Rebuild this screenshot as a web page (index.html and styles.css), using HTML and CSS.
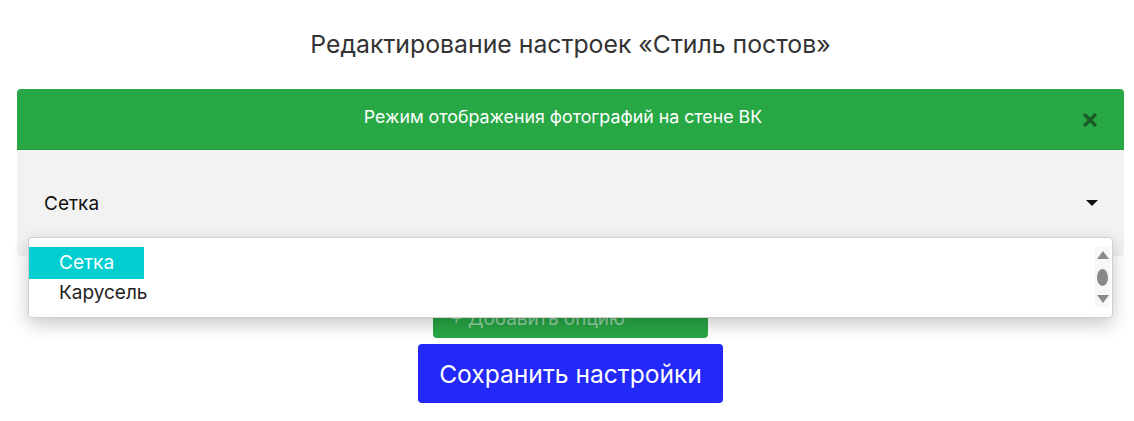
FILE: index.html
```html
<!DOCTYPE html>
<html lang="ru">
<head>
<meta charset="utf-8">
<link rel="stylesheet" href="styles.css">
</head>
<body>
<div class="page">
<h1 class="title">Редактирование настроек «Стиль постов»</h1>
<div class="panel">
  <div class="panel-head">
    <span class="panel-title">Режим отображения фотографий на стене ВК</span>
    <span class="close"><svg width="14" height="14" viewBox="0 0 14 14"><path d="M2 2L12 12M12 2L2 12" stroke="#1b5a29" stroke-width="3.2" stroke-linecap="round"/></svg></span>
  </div>
  <div class="panel-body">
    <div class="select">
      <span>Сетка</span>
      <span class="caret"></span>
    </div>
  </div>
  <div class="dropdown">
    <ul class="options">
      <li><span class="opt active">Сетка</span></li>
      <li><span class="opt">Карусель</span></li>
    </ul>
    <div class="scroll">
      <span class="tri up"></span>
      <span class="thumb"></span>
      <span class="tri down"></span>
    </div>
  </div>
</div>
<div class="actions">
  <button class="btn-add">+ Добавить опцию</button>
  <button class="btn-save">Сохранить настройки</button>
</div>
</div>
</body>
</html>
```
FILE: styles.css
```css
* { box-sizing: border-box; }
body {
  margin: 0;
  background: #fff;
  font-family: Inter, Roboto, "Noto Sans", sans-serif;
}
.page {
  margin: 0 10px 0 17px;
}
.title {
  margin: 0;
  padding-top: 28px;
  height: 89px;
  text-align: center;
  font-weight: 400;
  font-size: 24.8px;
  line-height: 32px;
  color: #333;
}
.panel {
  position: relative;
}
.panel-head {
  position: relative;
  height: 61px;
  background: #28a745;
  border-bottom: 1px solid #23963d;
  border-radius: 4px 4px 0 0;
  display: flex;
  align-items: center;
  justify-content: center;
  padding-bottom: 5px;
  padding-right: 15px;
}
.panel-title {
  color: #fff;
  font-size: 17.8px;
}
.close {
  position: absolute;
  right: 27px;
  top: 24px;
  display: flex;
}
.panel-body {
  height: 106px;
  background: #f2f2f2;
  border-radius: 0 0 4px 4px;
  padding: 41px 26px 0 27px;
}
.select {
  display: flex;
  justify-content: space-between;
  align-items: center;
  font-size: 19px;
  color: #111;
  height: 24px;
}
.caret {
  width: 0;
  height: 0;
  border-left: 6px solid transparent;
  border-right: 6px solid transparent;
  border-top: 6px solid #111;
}
.dropdown {
  position: absolute;
  left: 11px;
  right: 11px;
  top: 148px;
  height: 81px;
  background: #fff;
  border: 1px solid #cfcfcf;
  border-radius: 4px;
  box-shadow: 0 6px 18px rgba(0,0,0,0.22);
  display: flex;
  justify-content: space-between;
  z-index: 2;
}
.options {
  list-style: none;
  margin: 0;
  padding: 9px 0 0 0;
}
.opt {
  display: inline-block;
  height: 32px;
  line-height: 31px;
  padding: 0 30px 0 30px;
  font-size: 19px;
  color: #222;
}
.options li + li .opt {
  height: 28px;
  line-height: 28px;
}
.opt.active {
  background: #00ced1;
  color: #fff;
}
.scroll {
  width: 15px;
  margin: 9px 2px 10px 0;
  background: #f7f7f7;
  display: flex;
  flex-direction: column;
  align-items: center;
  justify-content: space-between;
  padding: 4px 0 4px;
}
.tri {
  width: 0;
  height: 0;
  border-left: 6px solid transparent;
  border-right: 6px solid transparent;
}
.tri.up { border-bottom: 8px solid #8a8a8a; }
.tri.down { border-top: 8px solid #8a8a8a; }
.thumb {
  width: 11px;
  height: 17px;
  border-radius: 50%;
  background: #888;
}
.actions {
  display: flex;
  flex-direction: column;
  align-items: center;
  padding-top: 42px;
}
.btn-add {
  width: 275px;
  height: 40px;
  border: none;
  border-radius: 4px;
  background: #28a745;
  color: rgba(255,255,255,0.5);
  font-family: inherit;
  font-size: 19px;
  text-align: left;
  padding: 0 0 0 17px;
}
.btn-save {
  margin-top: 6px;
  width: 305px;
  height: 59px;
  border: none;
  border-radius: 4px;
  background: #2229f8;
  color: #fff;
  font-family: inherit;
  font-size: 24.6px;
}
```
